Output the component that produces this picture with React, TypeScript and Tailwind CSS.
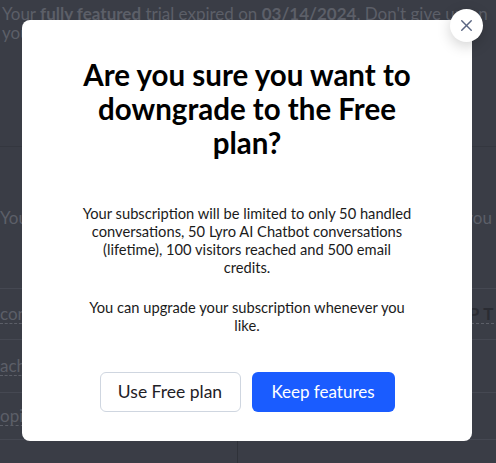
import { X } from "lucide-react";

const font = { fontFamily: "Lato, 'Open Sans', sans-serif" };

function BackgroundPage() {
  return (
    <div className="w-[496px] h-[463px] bg-[#3a3d46] text-[#5c5f68] overflow-hidden text-[17px]" style={font}>
      <div className="pl-[2px] pt-[4px] leading-[19px] whitespace-nowrap">
        <p>
          Your <span className="font-bold">fully featured</span> trial expired on{" "}
          <span className="font-bold">03/14/2024</span>. Don't give up on
        </p>
        <p>your success</p>
      </div>
      <div className="mt-[104px] h-[142px] border-t border-[#34373f] flex items-center justify-between">
        <span>You</span>
        <span className="mr-[4px]">you</span>
      </div>
      <div className="h-[51px] border-t border-[#454852] flex items-center justify-between">
        <span className="border-b border-dashed border-[#5c5f68] leading-[18px]">conv</span>
        <span className="font-bold text-[#2a2c33] tracking-wide border-b border-dashed border-[#5c5f68] leading-[18px] mr-[2px]">UP T</span>
      </div>
      <div className="h-[53px] border-t border-[#454852] flex items-center">
        <span className="border-b border-dashed border-[#5c5f68] leading-[18px]">ach</span>
      </div>
      <div className="h-[47px] border-t border-[#454852] flex items-center">
        <span className="border-b border-dashed border-[#5c5f68] leading-[18px]">opif</span>
      </div>
      <div className="h-[30px] border-t border-[#454852] flex">
        <div className="w-[238px] border-r border-[#2f3239]" />
      </div>
    </div>
  );
}

export default function App() {
  return (
    <div className="relative w-[496px] h-[463px] overflow-hidden">
      <BackgroundPage />
      <div
        className="absolute left-[22px] top-[20px] w-[450px] h-[421px] bg-white rounded-[8px] flex flex-col items-center pt-[38px] text-black"
        style={font}
      >
        <h2 className="text-[29.5px] font-bold leading-[34px] text-center w-[345px]">
          Are you sure you want to downgrade to the Free plan?
        </h2>
        <div className="mt-[44px] text-[14.7px] leading-[18px] text-center w-[333px] text-[#1b1b1b]">
          <p>
            Your subscription will be limited to only 50 handled conversations, 50 Lyro AI Chatbot conversations
            (lifetime), 100 visitors reached and 500 email credits.
          </p>
          <p className="mt-[22px]">You can upgrade your subscription whenever you like.</p>
        </div>
        <div className="mt-[38px] flex gap-[11px]">
          <button className="w-[141px] h-[40px] rounded-[6px] border border-[#cfd6e0] bg-white text-[17.5px] text-[#1f2126]">
            Use Free plan
          </button>
          <button className="w-[143px] h-[40px] rounded-[6px] bg-[#1a5cff] text-[17px] text-white">
            Keep features
          </button>
        </div>
      </div>
      <button className="absolute left-[450px] top-[9px] w-[33px] h-[33px] rounded-full bg-white flex items-center justify-center shadow-[0_4px_14px_rgba(0,0,0,0.18)]">
        <X size={19} strokeWidth={1.8} className="text-[#5a6682]" />
      </button>
    </div>
  );
}
